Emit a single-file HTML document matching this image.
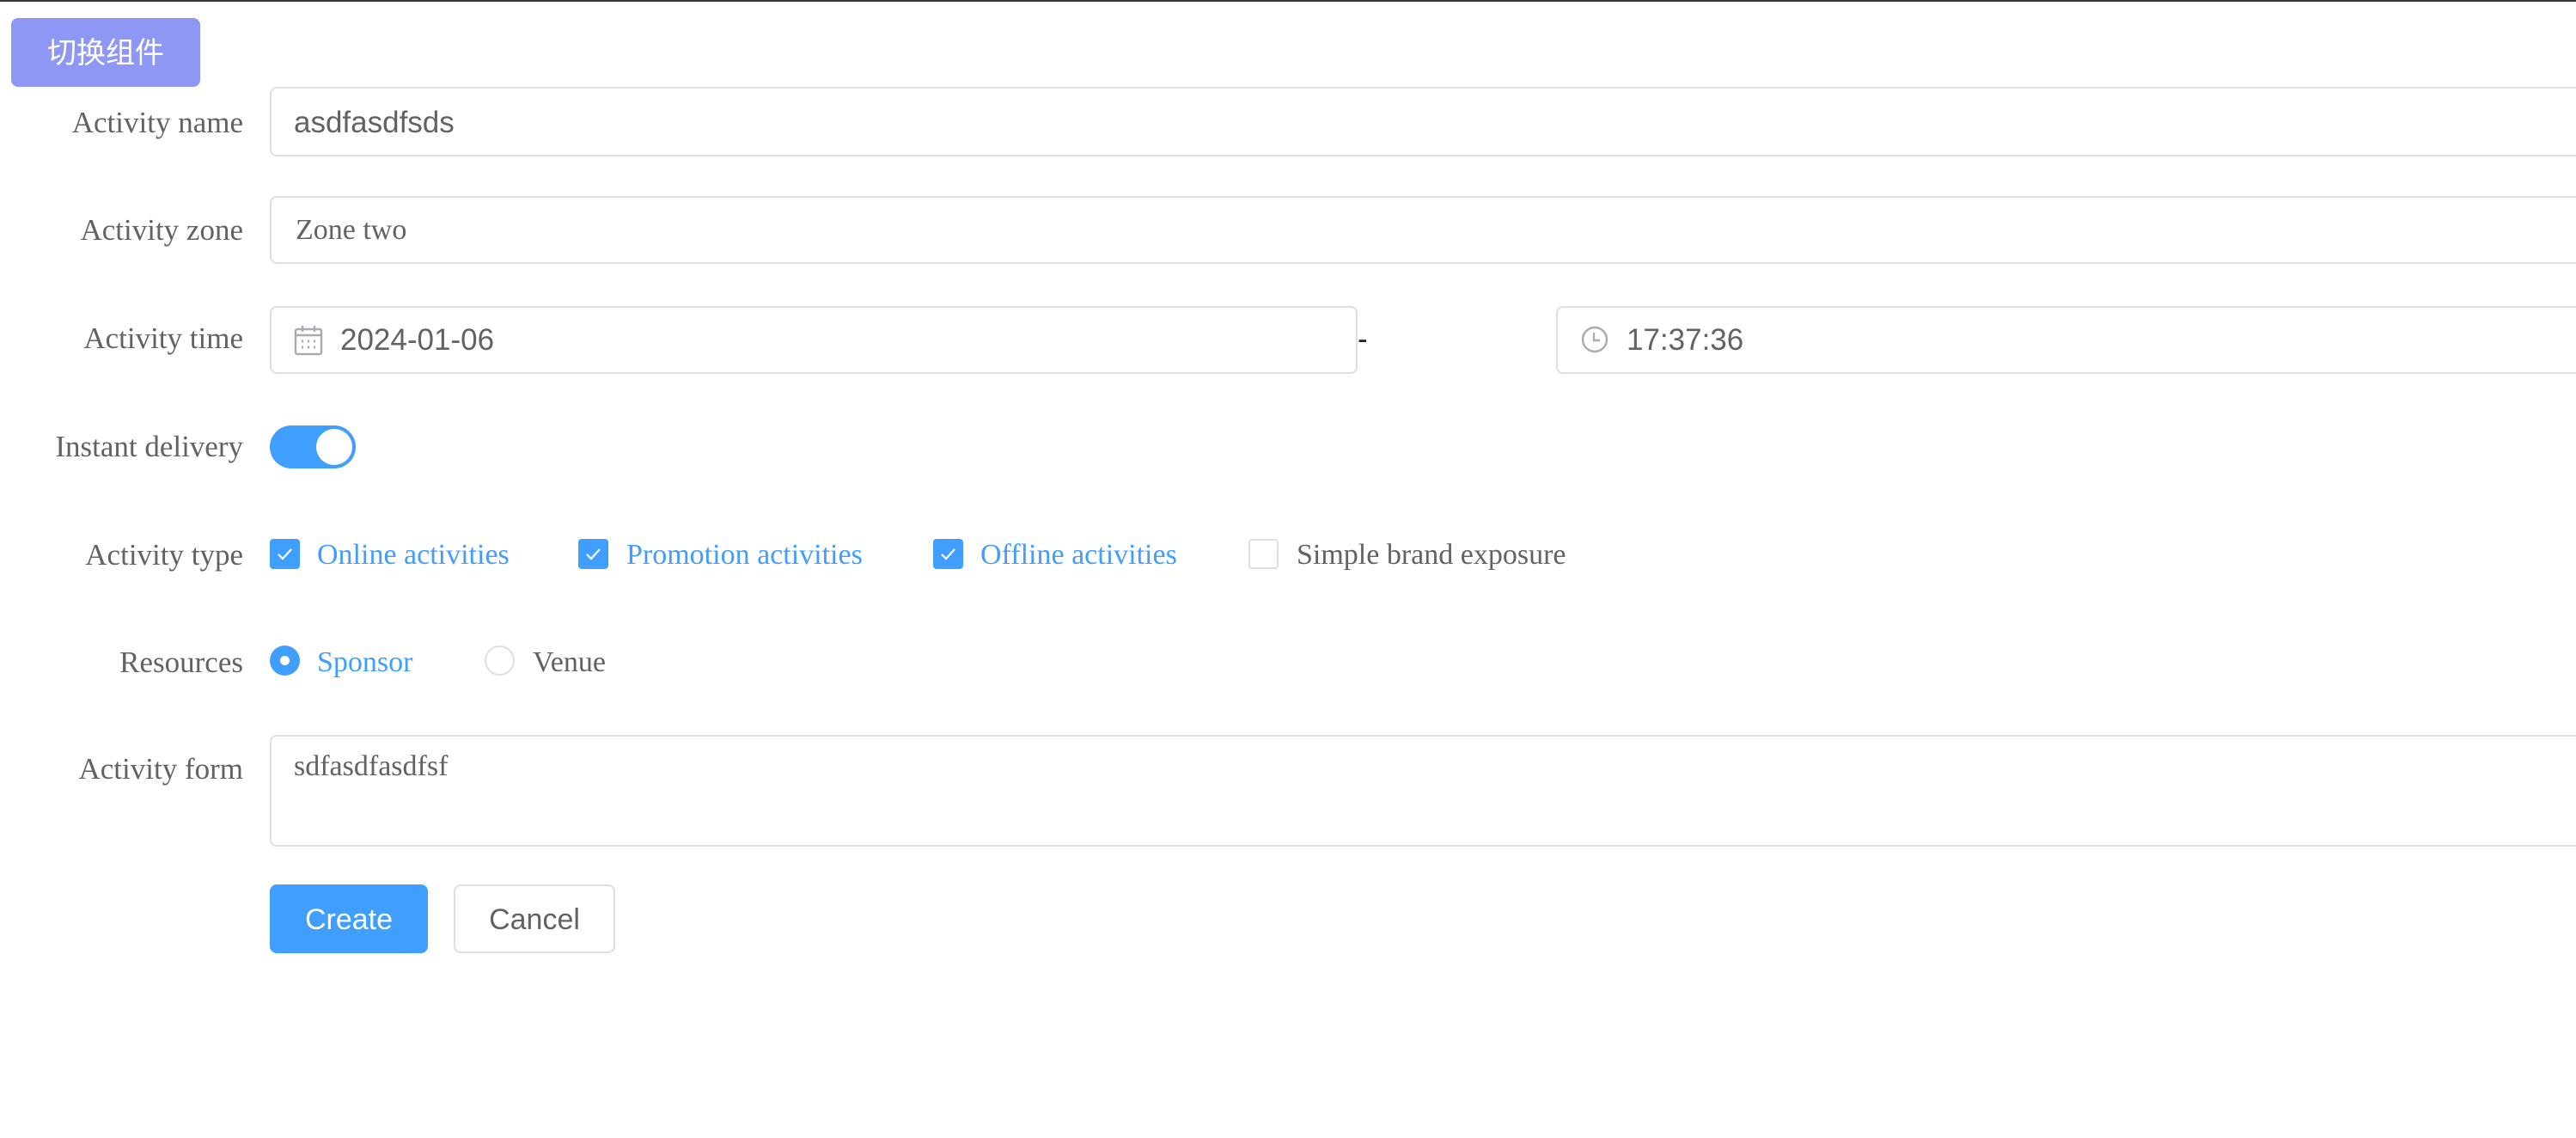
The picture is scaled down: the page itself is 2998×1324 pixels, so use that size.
<!DOCTYPE html>
<html><head><meta charset="utf-8"><style>
html,body{margin:0;padding:0;width:2998px;height:1324px;overflow:hidden;background:#fff;position:relative}
.a{position:absolute}
.lbl{position:absolute;right:2715px;font-family:"Liberation Serif",serif;font-size:35px;color:#606266;line-height:40px;white-space:nowrap;text-align:right}
.inp{position:absolute;border:2px solid #dcdfe6;border-radius:8px;box-sizing:border-box;background:#fff}
.t{position:absolute;font-family:"Liberation Sans",sans-serif;font-size:35px;color:#606266;line-height:40px;white-space:nowrap}
.s{position:absolute;font-family:"Liberation Serif",serif;font-size:34px;line-height:40px;white-space:nowrap}
.cb{position:absolute;width:35px;height:35px;border-radius:4px;box-sizing:border-box;background:#409eff}
</style></head><body>
<div class="a" style="left:0;top:0;width:2998px;height:2px;background:#333"></div>
<div class="a" style="left:13px;top:21px;width:220px;height:80px;border-radius:8px;background:#8f97f5;color:#fff;font-family:'Liberation Sans','Noto Sans CJK SC',sans-serif;font-size:34px;line-height:82px;text-align:center">切换组件</div>

<div class="lbl" style="top:123px">Activity name</div>
<div class="inp" style="left:314px;top:101px;width:2700px;height:81px"></div>
<div class="t" style="left:342px;top:123px">asdfasdfsds</div>

<div class="lbl" style="top:248px">Activity zone</div>
<div class="inp" style="left:314px;top:228px;width:2700px;height:79px"></div>
<div class="s" style="left:344px;top:248px;color:#606266">Zone two</div>

<div class="lbl" style="top:374px">Activity time</div>
<div class="inp" style="left:314px;top:356px;width:1266px;height:79px"></div>
<svg class="a" style="left:342px;top:378px" width="34" height="36" viewBox="0 0 34 36" fill="none" stroke="#a8abb2" stroke-width="2.4"><rect x="2" y="5" width="30" height="29" rx="2"/><line x1="2" y1="12" x2="32" y2="12"/><line x1="10" y1="1" x2="10" y2="8"/><line x1="24" y1="1" x2="24" y2="8"/><g stroke-width="3"><line x1="9" y1="19" x2="11" y2="19"/><line x1="16" y1="19" x2="18" y2="19"/><line x1="23" y1="19" x2="25" y2="19"/><line x1="9" y1="26" x2="11" y2="26"/><line x1="16" y1="26" x2="18" y2="26"/><line x1="23" y1="26" x2="25" y2="26"/></g></svg>
<div class="t" style="left:396px;top:376px">2024-01-06</div>
<div class="t" style="left:1580px;top:375px;color:#222">-</div>
<div class="inp" style="left:1811px;top:356px;width:1200px;height:79px"></div>
<svg class="a" style="left:1840px;top:379px" width="32" height="32" viewBox="0 0 32 32" fill="none" stroke="#a8abb2" stroke-width="2.4"><circle cx="16" cy="16" r="14"/><path d="M15 8v9h7"/></svg>
<div class="t" style="left:1893px;top:376px">17:37:36</div>

<div class="lbl" style="top:500px">Instant delivery</div>
<div class="a" style="left:314px;top:495px;width:100px;height:50px;border-radius:25px;background:#409eff"></div>
<div class="a" style="left:368px;top:499px;width:42px;height:42px;border-radius:50%;background:#fff"></div>

<div class="lbl" style="top:626px">Activity type</div>
<div class="cb" style="left:314px;top:627px"></div>
<svg class="a" style="left:314px;top:627px" width="35" height="35" viewBox="0 0 35 35" fill="none" stroke="#fff" stroke-width="2.2"><path d="M10 18l5 5 10-11"/></svg>
<div class="s" style="left:369px;top:626px;color:#409eff">Online activities</div>
<div class="cb" style="left:673px;top:627px"></div>
<svg class="a" style="left:673px;top:627px" width="35" height="35" viewBox="0 0 35 35" fill="none" stroke="#fff" stroke-width="2.2"><path d="M10 18l5 5 10-11"/></svg>
<div class="s" style="left:729px;top:626px;color:#409eff">Promotion activities</div>
<div class="cb" style="left:1086px;top:627px"></div>
<svg class="a" style="left:1086px;top:627px" width="35" height="35" viewBox="0 0 35 35" fill="none" stroke="#fff" stroke-width="2.2"><path d="M10 18l5 5 10-11"/></svg>
<div class="s" style="left:1141px;top:626px;color:#409eff">Offline activities</div>
<div class="cb" style="left:1453px;top:627px;background:#fff;border:2px solid #dcdfe6"></div>
<div class="s" style="left:1509px;top:626px;color:#606266">Simple brand exposure</div>

<div class="lbl" style="top:751px">Resources</div>
<div class="a" style="left:314px;top:751px;width:35px;height:35px;border-radius:50%;background:#409eff"></div>
<div class="a" style="left:326px;top:763px;width:11px;height:11px;border-radius:50%;background:#fff"></div>
<div class="s" style="left:369px;top:751px;color:#409eff">Sponsor</div>
<div class="a" style="left:564px;top:751px;width:35px;height:35px;border-radius:50%;box-sizing:border-box;border:2px solid #dcdfe6"></div>
<div class="s" style="left:620px;top:751px;color:#606266">Venue</div>

<div class="lbl" style="top:875px">Activity form</div>
<div class="inp" style="left:314px;top:855px;width:2700px;height:130px"></div>
<div class="s" style="left:342px;top:872px;color:#606266">sdfasdfasdfsf</div>

<div class="a" style="left:314px;top:1029px;width:184px;height:80px;border-radius:8px;background:#409eff;color:#fff;font-family:'Liberation Sans',sans-serif;font-size:34px;line-height:82px;text-align:center">Create</div>
<div class="a" style="left:528px;top:1029px;width:188px;height:80px;border-radius:8px;box-sizing:border-box;border:2px solid #dcdfe6;color:#606266;font-family:'Liberation Sans',sans-serif;font-size:34px;line-height:78px;text-align:center">Cancel</div>
</body></html>
